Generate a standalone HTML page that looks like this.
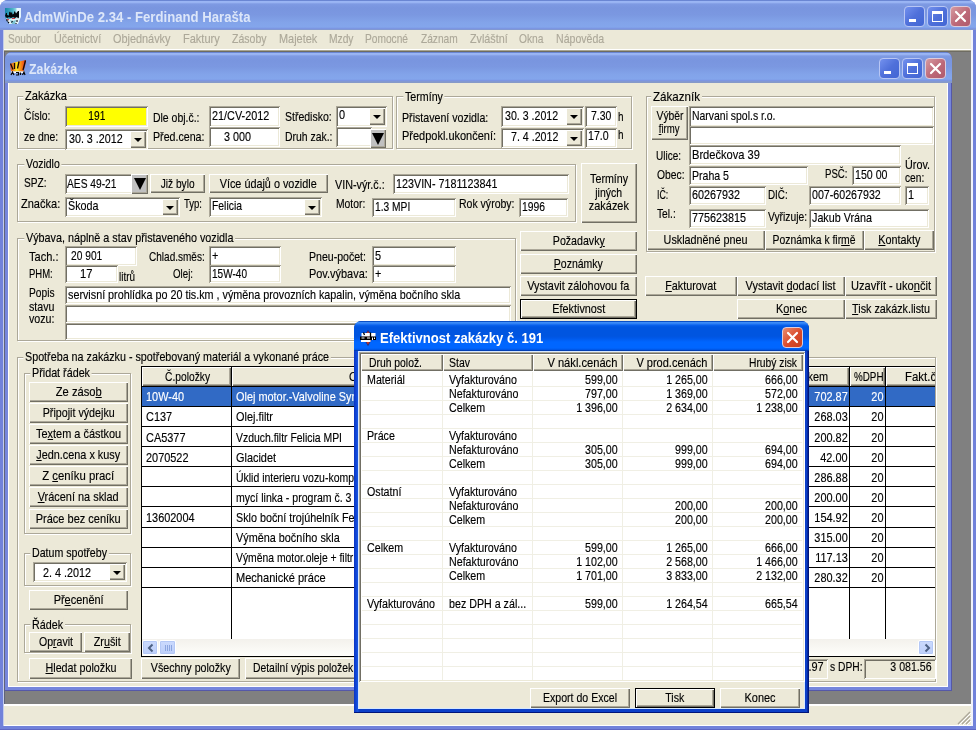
<!DOCTYPE html>
<html lang="cs"><head><meta charset="utf-8"><title>AdmWinDe 2.34 - Ferdinand Harašta</title>
<style>
html,body{margin:0;padding:0;background:#fff;overflow:hidden}
#r{position:relative;width:976px;height:730px;overflow:hidden;will-change:transform;font-family:"Liberation Sans",sans-serif;color:#000}
#r div,#r .a,#r span.t{position:absolute;box-sizing:border-box}
.t{white-space:pre;line-height:16px;display:block;-webkit-text-stroke:0.15px currentColor}
.t u{text-decoration:underline;text-underline-offset:1px}
.gl{background:#ECE9D8;box-shadow:-2px 0 0 #ECE9D8,2px 0 0 #ECE9D8}
.f{background:#fff;box-shadow:inset 1px 1px 0 #ACA899,inset -1px -1px 0 #fff,inset 2px 2px 0 #716F64,inset -2px -2px 0 #ECE9D8}
.b{background:#ECE9D8;box-shadow:inset 1px 1px 0 #fff,inset -1px -1px 0 #716F64,inset -2px -2px 0 #ACA899}
.b.d{border:1px solid #000}
.b.h{box-shadow:inset 1px 1px 0 #fff,inset -1px -1px 0 #716F64,inset -2px -2px 0 #ACA899}
.b.hh{box-shadow:inset 1px 1px 0 #fff,inset -1px -1px 0 #716F64,inset -2px -2px 0 #ACA899}
.g{border:1px solid #ACA899;box-shadow:inset 1px 1px 0 #fff,1px 1px 0 #fff}
i.ar{position:absolute;width:0;height:0;border-left:4px solid transparent;border-right:4px solid transparent;border-top:4px solid #000}
i.bar{position:absolute;width:0;height:0;border-left:6px solid transparent;border-right:6px solid transparent;border-top:12px solid #000}
.mainwin{background:#7182DA;border-radius:8px 8px 0 0;box-shadow:inset 0 -1px 0 #5F67C4}
.childwin{background:#7686DC;border-radius:7px 7px 0 0;box-shadow:inset -1px 0 0 #5558A8,inset 0 -1px 0 #5558A8}
.cap-in{border-radius:8px 8px 0 0;background:linear-gradient(#6A86D3 0,#6A86D3 1px,#9AB5F4 1.5px,#98B3F2 2.5px,#7E9AE3 4px,#7995DF 8px,#7B98E1 15px,#82A3E9 22px,#84A6EC 27px,#7C96E2 28.5px,#8599C9 30px)}
.cap-in.ch{border-radius:7px 7px 0 0}
.cap-act{border-radius:7px 7px 0 0;background:linear-gradient(#0A4FC6 0,#0A4FC6 1px,#3C8CF8 1.5px,#2A7CF4 3px,#0A62EE 4px,#0055E0 6px,#0055E0 15px,#0058E8 17px,#0066FF 21px,#0066FF 27px,#0058E8 28.5px,#003EB4 29.5px)}
.dlg{background:linear-gradient(90deg,#0A34C4 0,#1656E4 4px,#0C3FC8 5px,#0C3FC8 calc(100% - 2px),#00157A calc(100% - 1px));border-radius:8px 8px 0 0;box-shadow:inset 0 -1px 0 #00157A}
.cb{border:1px solid #B8C6F4;border-radius:4px;background:linear-gradient(135deg,#7391EE 0,#4F70DA 50%,#4266D4 100%)}
.cb.cx{border-color:#DCCCDC;background:linear-gradient(135deg,#D69AA0 0,#BD6878 55%,#B05A6C 100%)}
.cb.cx.act{background:linear-gradient(135deg,#EC8D6E,#D9492B 55%,#C8401F)}
.sbt{background:linear-gradient(#F3F1EC,#FEFEFB)}
.sbb{border:1px solid #fff;border-radius:2px;background:linear-gradient(#CBDAFD,#BDCFFA);box-shadow:inset 0 0 0 1px #B4C8F6}
</style></head>
<body><div id="r">
<div class="mainwin" style="left:0px;top:0px;width:976px;height:730px;"></div>
<div class="cap-in" style="left:0px;top:0px;width:976px;height:30px;"></div>
<span class="t" style="top:9.00px;font-size:14px;left:24.30px;transform:scaleX(0.9397);transform-origin:0 0;color:#DCE6F9;font-weight:bold;-webkit-text-stroke:0;">AdmWinDe 2.34 - Ferdinand Harašta</span>
<svg class="a" style="left:5px;top:8px" width="16" height="16" viewBox="0 0 16 16"><defs><linearGradient id="ig" x1="0" x2="1" y1="0" y2="0"><stop offset="0" stop-color="#1583A6"/><stop offset=".5" stop-color="#4FB6C8"/><stop offset=".68" stop-color="#8FD4E0"/><stop offset=".75" stop-color="#EAF8FF"/><stop offset="1" stop-color="#E2F4FC"/></linearGradient></defs><path d="M0 0h16v9l-1 2-2 5H4L1 11 0 9z" fill="url(#ig)"/><path d="M1 10l3 1 4-1 4 1 2-1-1 3-1 3H4z" fill="#E3F3F7"/><path d="M5 12l2 4h3l1-4-3 1z" fill="#7CC4D2"/><path d="M2 11l2 1M7 10.5l3 0" stroke="#D8303A" stroke-width="1.2"/><path d="M0 8l1-3h1v2l2 .5V4.500l1 -1 1 1.500 1-1 .5 2.500 1.500-1V3.500l1 0 1 2 2-2.500h1v6.500l-1 1-1-1.500-2 1-2-1-2 1-2-1-2 1z" fill="#04070b"/><path d="M1.500 11.500l1 2M3 14l1 1M7.500 13l-1 1.500M12 12v2M11 15v1" stroke="#04070b" stroke-width="1.100"/></svg>
<div class="cb" style="left:904px;top:6px;width:21px;height:21px;"><i style="position:absolute;left:4px;top:12px;width:7px;height:3px;background:#fff"></i></div>
<div class="cb" style="left:927px;top:6px;width:21px;height:21px;"><i style="position:absolute;left:4px;top:4px;width:11px;height:11px;border:1px solid #fff;border-top-width:3px;box-sizing:border-box"></i></div>
<div class="cb cx" style="left:950px;top:6px;width:21px;height:21px;"><svg width="19" height="19" style="position:absolute;left:0;top:0"><path d="M5 5l9 9M14 5l-9 9" stroke="#fff" stroke-width="2.2" stroke-linecap="round"/></svg></div>
<div style="left:3px;top:30px;width:1px;height:696px;background:#C4CCEA;"></div>
<div style="left:971px;top:30px;width:2px;height:696px;background:#F2F3FA;"></div>
<div style="left:4px;top:30px;width:967px;height:19px;background:#ECE9D8;"></div>
<span class="t" style="top:30.50px;font-size:13px;left:8.30px;transform:scaleX(0.7753);transform-origin:0 0;color:#ACA899;">Soubor</span>
<span class="t" style="top:30.50px;font-size:13px;left:53.80px;transform:scaleX(0.8278);transform-origin:0 0;color:#ACA899;">Účetnictví</span>
<span class="t" style="top:30.50px;font-size:13px;left:113.05px;transform:scaleX(0.8375);transform-origin:0 0;color:#ACA899;">Objednávky</span>
<span class="t" style="top:30.50px;font-size:13px;left:182.55px;transform:scaleX(0.8479);transform-origin:0 0;color:#ACA899;">Faktury</span>
<span class="t" style="top:30.50px;font-size:13px;left:231.80px;transform:scaleX(0.8091);transform-origin:0 0;color:#ACA899;">Zásoby</span>
<span class="t" style="top:30.50px;font-size:13px;left:278.80px;transform:scaleX(0.8401);transform-origin:0 0;color:#ACA899;">Majetek</span>
<span class="t" style="top:30.50px;font-size:13px;left:328.80px;transform:scaleX(0.7887);transform-origin:0 0;color:#ACA899;">Mzdy</span>
<span class="t" style="top:30.50px;font-size:13px;left:365.30px;transform:scaleX(0.7829);transform-origin:0 0;color:#ACA899;">Pomocné</span>
<span class="t" style="top:30.50px;font-size:13px;left:420.80px;transform:scaleX(0.7824);transform-origin:0 0;color:#ACA899;">Záznam</span>
<span class="t" style="top:30.50px;font-size:13px;left:469.55px;transform:scaleX(0.8294);transform-origin:0 0;color:#ACA899;">Zvláštní</span>
<span class="t" style="top:30.50px;font-size:13px;left:519.05px;transform:scaleX(0.7883);transform-origin:0 0;color:#ACA899;">Okna</span>
<span class="t" style="top:30.50px;font-size:13px;left:556.05px;transform:scaleX(0.8139);transform-origin:0 0;color:#ACA899;">Nápověda</span>
<div style="left:4px;top:49px;width:967px;height:1px;background:#fff;"></div>
<div style="left:4px;top:50px;width:967px;height:1px;background:#A8A593;"></div>
<div style="left:4px;top:51px;width:967px;height:1px;background:#6E6C62;"></div>
<div style="left:4px;top:52px;width:967px;height:652px;background:#808080;"></div>
<div style="left:4px;top:52px;width:1px;height:652px;background:#5E637C;"></div>
<div style="left:4px;top:704px;width:967px;height:22px;background:#ECE9D8;border-top:2px solid #fff;border-bottom:1px solid #fff;box-sizing:border-box"></div>
<svg class="a" style="left:957px;top:711px" width="14" height="14"><path d="M13 1L1 13M13 5L5 13M13 9L9 13" stroke="#ACA899" stroke-width="1.4"/><path d="M14 2L2 14M14 6L6 14M14 10L10 14" stroke="#fff" stroke-width="1"/></svg>
<div class="childwin" style="left:5px;top:52px;width:947px;height:639px;"></div>
<div class="cap-in ch" style="left:5px;top:52px;width:947px;height:31px;"></div>
<span class="t" style="top:60.75px;font-size:14px;left:29.30px;transform:scaleX(0.8810);transform-origin:0 0;color:#DCE6F9;font-weight:bold;-webkit-text-stroke:0;">Zakázka</span>
<svg class="a" style="left:10px;top:60px" width="16" height="16" viewBox="0 0 16 16"><defs><linearGradient id="fg" x1="0" x2="1" y1="0" y2="0"><stop offset="0" stop-color="#E04A20"/><stop offset=".25" stop-color="#F79A1C"/><stop offset=".42" stop-color="#FFE91E"/><stop offset=".6" stop-color="#FBA315"/><stop offset=".85" stop-color="#F0561A"/><stop offset="1" stop-color="#A8260E"/></linearGradient></defs><path d="M0 4l4-1.500L9 1.500 16 0l-1 6-1.500 5.500H1z" fill="url(#fg)"/><path d="M.5 3.500L3 9.500M4.500 3v6M9 1.500L7.500 8.500M15.500 .5L13 10" stroke="#16080a" stroke-width="1.300" fill="none"/><path d="M1 11.500h14v1.500H1z" fill="#fff"/><path d="M1 15l1.500-3 1.500 3M6 12.500h2.500v2.500H6M10.500 12.500v2.500M12.500 15l1.500-3 1 3" stroke="#06060a" stroke-width="1.200" fill="none"/></svg>
<div class="cb" style="left:879px;top:58px;width:21px;height:21px;"><i style="position:absolute;left:4px;top:12px;width:7px;height:3px;background:#fff"></i></div>
<div class="cb" style="left:902px;top:58px;width:21px;height:21px;"><i style="position:absolute;left:4px;top:4px;width:11px;height:11px;border:1px solid #fff;border-top-width:3px;box-sizing:border-box"></i></div>
<div class="cb cx" style="left:925px;top:58px;width:21px;height:21px;"><svg width="19" height="19" style="position:absolute;left:0;top:0"><path d="M5 5l9 9M14 5l-9 9" stroke="#fff" stroke-width="2.2" stroke-linecap="round"/></svg></div>
<div style="left:8px;top:83px;width:940px;height:604px;background:#fff;"></div>
<div style="left:9px;top:83px;width:938px;height:603px;background:#ECE9D8;"></div>
<div class="g" style="left:17px;top:96px;width:376px;height:53px;"></div>
<span class="t gl" style="top:88.30px;font-size:13px;left:25.05px;transform:scaleX(0.8547);transform-origin:0 0;">Zakázka</span>
<span class="t" style="top:108.00px;font-size:13px;left:23.80px;transform:scaleX(0.7974);transform-origin:0 0;">Číslo:</span>
<div class="f" style="left:65px;top:106px;width:83px;height:21px;background:#FFFF00;"></div>
<span class="t" style="top:108.00px;font-size:13px;left:86.40px;transform:scaleX(0.7833);transform-origin:50% 0;">191</span>
<span class="t" style="top:128.50px;font-size:13px;left:23.80px;transform:scaleX(0.8029);transform-origin:0 0;">ze dne:</span>
<div class="f" style="left:65px;top:129px;width:83px;height:21px;"></div>
<div class="b" style="left:130px;top:131px;width:16px;height:17px;"><i class="ar" style="left:4.0px;top:7.0px"></i></div>
<span class="t" style="top:131.00px;font-size:13px;left:68.90px;transform:scaleX(0.8238);transform-origin:0 0;">30. 3 .2012</span>
<span class="t" style="top:109.50px;font-size:13px;left:152.80px;transform:scaleX(0.8043);transform-origin:0 0;">Dle obj.č.:</span>
<div class="f" style="left:209px;top:106px;width:71px;height:21px;"></div>
<span class="t" style="top:107.80px;font-size:13px;left:212.30px;transform:scaleX(0.8337);transform-origin:0 0;">21/CV-2012</span>
<span class="t" style="top:128.50px;font-size:13px;left:152.80px;transform:scaleX(0.8191);transform-origin:0 0;">Před.cena:</span>
<div class="f" style="left:209px;top:127px;width:71px;height:20px;"></div>
<span class="t" style="top:128.50px;font-size:13px;left:224.30px;transform:scaleX(0.8296);transform-origin:0 0;">3 000</span>
<span class="t" style="top:108.50px;font-size:13px;left:284.55px;transform:scaleX(0.8086);transform-origin:0 0;">Středisko:</span>
<div class="f" style="left:336px;top:106px;width:51px;height:21px;"></div>
<div class="b" style="left:369px;top:108px;width:16px;height:17px;"><i class="ar" style="left:4.0px;top:7.0px"></i></div>
<span class="t" style="top:107.00px;font-size:13px;left:339.30px;transform:scaleX(0.8400);transform-origin:0 0;">0</span>
<span class="t" style="top:128.50px;font-size:13px;left:284.55px;transform:scaleX(0.8017);transform-origin:0 0;">Druh zak.:</span>
<div class="f" style="left:336px;top:127px;width:36px;height:20px;"></div>
<div class="b" style="left:370px;top:129px;width:16px;height:19px;background:#C0C0C0;"><i class="bar" style="left:2.0px;top:3.5px"></i></div>
<div class="g" style="left:396px;top:96px;width:236px;height:53px;"></div>
<span class="t gl" style="top:89.30px;font-size:13px;left:405.30px;transform:scaleX(0.8197);transform-origin:0 0;">Termíny</span>
<span class="t" style="top:109.70px;font-size:13px;left:402.05px;transform:scaleX(0.8175);transform-origin:0 0;">Přistavení vozidla:</span>
<div class="f" style="left:501px;top:106px;width:83px;height:21px;"></div>
<div class="b" style="left:566px;top:108px;width:16px;height:17px;"><i class="ar" style="left:4.0px;top:7.0px"></i></div>
<span class="t" style="top:108.00px;font-size:13px;left:505.10px;transform:scaleX(0.8161);transform-origin:0 0;">30. 3 .2012</span>
<div class="f" style="left:585px;top:106px;width:32px;height:21px;"></div>
<span class="t" style="top:108.00px;font-size:13px;left:591.40px;transform:scaleX(0.8059);transform-origin:0 0;">7.30</span>
<span class="t" style="top:109.00px;font-size:13px;left:618.00px;transform:scaleX(0.7603);transform-origin:0 0;">h</span>
<span class="t" style="top:127.70px;font-size:13px;left:402.05px;transform:scaleX(0.8446);transform-origin:0 0;">Předpokl.ukončení:</span>
<div class="f" style="left:501px;top:128px;width:83px;height:20px;"></div>
<div class="b" style="left:566px;top:130px;width:16px;height:16px;"><i class="ar" style="left:4.0px;top:6.5px"></i></div>
<span class="t" style="top:129.00px;font-size:13px;left:510.90px;transform:scaleX(0.8179);transform-origin:0 0;">7. 4 .2012</span>
<div class="f" style="left:585px;top:128px;width:32px;height:20px;"></div>
<span class="t" style="top:128.30px;font-size:13px;left:588.10px;transform:scaleX(0.8178);transform-origin:0 0;">17.0</span>
<span class="t" style="top:127.00px;font-size:13px;left:618.00px;transform:scaleX(0.7603);transform-origin:0 0;">h</span>
<div class="g" style="left:646px;top:96px;width:289px;height:156px;"></div>
<span class="t gl" style="top:89.10px;font-size:13px;left:652.80px;transform:scaleX(0.8910);transform-origin:0 0;">Zákazník</span>
<div class="b" style="left:651px;top:106px;width:37px;height:34px;"></div>
<span class="t" style="top:107.50px;font-size:13px;left:652.52px;transform:scaleX(0.7948);transform-origin:50% 0;">Výběr</span>
<span class="t" style="top:120.90px;font-size:13px;left:655.41px;transform:scaleX(0.7366);transform-origin:50% 0;"><u>f</u>irmy</span>
<div class="f" style="left:689px;top:106px;width:245px;height:21px;"></div>
<span class="t" style="top:107.50px;font-size:13px;left:692.30px;transform:scaleX(0.8025);transform-origin:0 0;">Narvani spol.s r.o.</span>
<div class="f" style="left:689px;top:126px;width:245px;height:19px;"></div>
<span class="t" style="top:147.50px;font-size:13px;left:656.05px;transform:scaleX(0.7689);transform-origin:0 0;">Ulice:</span>
<div class="f" style="left:689px;top:145px;width:212px;height:20px;"></div>
<span class="t" style="top:146.50px;font-size:13px;left:692.30px;transform:scaleX(0.8553);transform-origin:0 0;">Brdečkova 39</span>
<span class="t" style="top:166.90px;font-size:13px;left:657.30px;transform:scaleX(0.7928);transform-origin:0 0;">Obec:</span>
<div class="f" style="left:689px;top:166px;width:119px;height:19px;"></div>
<span class="t" style="top:167.60px;font-size:13px;left:692.30px;transform:scaleX(0.8123);transform-origin:0 0;">Praha 5</span>
<span class="t" style="top:166.25px;font-size:13px;left:825.05px;transform:scaleX(0.7415);transform-origin:0 0;">PSČ:</span>
<div class="f" style="left:852px;top:166px;width:49px;height:19px;"></div>
<span class="t" style="top:167.00px;font-size:13px;left:855.05px;transform:scaleX(0.8173);transform-origin:0 0;">150 00</span>
<span class="t" style="top:157.00px;font-size:13px;left:904.55px;transform:scaleX(0.8303);transform-origin:0 0;">Úrov.</span>
<span class="t" style="top:169.50px;font-size:13px;left:904.55px;transform:scaleX(0.7832);transform-origin:0 0;">cen:</span>
<span class="t" style="top:186.75px;font-size:13px;left:657.30px;transform:scaleX(0.6767);transform-origin:0 0;">IČ:</span>
<div class="f" style="left:689px;top:186px;width:77px;height:19px;"></div>
<span class="t" style="top:186.50px;font-size:13px;left:692.30px;transform:scaleX(0.8298);transform-origin:0 0;">60267932</span>
<span class="t" style="top:186.75px;font-size:13px;left:768.30px;transform:scaleX(0.7577);transform-origin:0 0;">DIČ:</span>
<div class="f" style="left:809px;top:186px;width:92px;height:19px;"></div>
<span class="t" style="top:186.50px;font-size:13px;left:811.80px;transform:scaleX(0.8198);transform-origin:0 0;">007-60267932</span>
<div class="f" style="left:905px;top:186px;width:24px;height:19px;"></div>
<span class="t" style="top:186.50px;font-size:13px;left:907.80px;transform:scaleX(0.8400);transform-origin:0 0;">1</span>
<span class="t" style="top:206.25px;font-size:13px;left:657.30px;transform:scaleX(0.7864);transform-origin:0 0;">Tel.:</span>
<div class="f" style="left:689px;top:209px;width:77px;height:19px;"></div>
<span class="t" style="top:209.50px;font-size:13px;left:692.30px;transform:scaleX(0.8298);transform-origin:0 0;">775623815</span>
<span class="t" style="top:208.50px;font-size:13px;left:768.30px;transform:scaleX(0.7899);transform-origin:0 0;">Vyřizuje:</span>
<div class="f" style="left:809px;top:209px;width:120px;height:19px;"></div>
<span class="t" style="top:209.50px;font-size:13px;left:811.80px;transform:scaleX(0.8274);transform-origin:0 0;">Jakub Vrána</span>
<div class="b" style="left:647px;top:230px;width:118px;height:20px;"></div>
<span class="t" style="top:232.00px;font-size:13px;left:655.40px;transform:scaleX(0.8300);transform-origin:50% 0;">Uskladněné pneu</span>
<div class="b" style="left:765px;top:230px;width:99px;height:20px;"></div>
<span class="t" style="top:232.00px;font-size:13px;left:762.48px;transform:scaleX(0.7977);transform-origin:50% 0;">Poznámka k fir<u>m</u>ě</span>
<div class="b" style="left:864px;top:230px;width:70px;height:20px;"></div>
<span class="t" style="top:232.00px;font-size:13px;left:873.70px;transform:scaleX(0.8301);transform-origin:50% 0;"><u>K</u>ontakty</span>
<div class="g" style="left:17px;top:164px;width:559px;height:58px;"></div>
<span class="t gl" style="top:156.25px;font-size:13px;left:25.55px;transform:scaleX(0.8051);transform-origin:0 0;">Vozidlo</span>
<span class="t" style="top:174.50px;font-size:13px;left:24.30px;transform:scaleX(0.7784);transform-origin:0 0;">SPZ:</span>
<div class="f" style="left:65px;top:174px;width:68px;height:20px;"></div>
<span class="t" style="top:175.50px;font-size:13px;left:67.30px;transform:scaleX(0.7873);transform-origin:0 0;">AES 49-21</span>
<div class="b" style="left:131px;top:174px;width:17px;height:20px;background:#C0C0C0;"><i class="bar" style="left:2.5px;top:4.0px"></i></div>
<div class="b" style="left:150px;top:174px;width:55px;height:19px;"></div>
<span class="t" style="top:175.50px;font-size:13px;left:155.82px;transform:scaleX(0.7784);transform-origin:50% 0;">Již bylo</span>
<div class="b" style="left:209px;top:174px;width:119px;height:19px;"></div>
<span class="t" style="top:175.50px;font-size:13px;left:210.32px;transform:scaleX(0.8336);transform-origin:50% 0;">Více údajů o vozidle</span>
<span class="t" style="top:177.00px;font-size:13px;left:335.30px;transform:scaleX(0.8298);transform-origin:0 0;">VIN-výr.č.:</span>
<div class="f" style="left:393px;top:174px;width:176px;height:20px;"></div>
<span class="t" style="top:175.50px;font-size:13px;left:396.30px;transform:scaleX(0.8276);transform-origin:0 0;">123VIN- 7181123841</span>
<span class="t" style="top:196.25px;font-size:13px;left:20.55px;transform:scaleX(0.8486);transform-origin:0 0;">Značka:</span>
<div class="f" style="left:65px;top:197px;width:115px;height:20px;"></div>
<div class="b" style="left:162px;top:199px;width:16px;height:16px;"><i class="ar" style="left:4.0px;top:6.5px"></i></div>
<span class="t" style="top:198.00px;font-size:13px;left:68.05px;transform:scaleX(0.8271);transform-origin:0 0;">Škoda</span>
<span class="t" style="top:196.25px;font-size:13px;left:183.80px;transform:scaleX(0.7324);transform-origin:0 0;">Typ:</span>
<div class="f" style="left:209px;top:197px;width:113px;height:20px;"></div>
<div class="b" style="left:304px;top:199px;width:16px;height:16px;"><i class="ar" style="left:4.0px;top:6.5px"></i></div>
<span class="t" style="top:198.00px;font-size:13px;left:211.80px;transform:scaleX(0.7983);transform-origin:0 0;">Felicia</span>
<span class="t" style="top:196.25px;font-size:13px;left:335.80px;transform:scaleX(0.7939);transform-origin:0 0;">Motor:</span>
<div class="f" style="left:372px;top:198px;width:84px;height:19px;"></div>
<span class="t" style="top:198.50px;font-size:13px;left:375.05px;transform:scaleX(0.7869);transform-origin:0 0;">1.3 MPI</span>
<span class="t" style="top:196.25px;font-size:13px;left:458.80px;transform:scaleX(0.8086);transform-origin:0 0;">Rok výroby:</span>
<div class="f" style="left:519px;top:198px;width:49px;height:19px;"></div>
<span class="t" style="top:198.50px;font-size:13px;left:522.30px;transform:scaleX(0.7952);transform-origin:0 0;">1996</span>
<div class="b" style="left:581px;top:163px;width:56px;height:60px;"></div>
<span class="t" style="top:171.25px;font-size:13px;left:585.88px;transform:scaleX(0.8219);transform-origin:50% 0;">Termíny</span>
<span class="t" style="top:185.00px;font-size:13px;left:592.38px;transform:scaleX(0.8045);transform-origin:50% 0;">jiných</span>
<span class="t" style="top:197.50px;font-size:13px;left:585.15px;transform:scaleX(0.8385);transform-origin:50% 0;">zakázek</span>
<div class="g" style="left:17px;top:238px;width:499px;height:103px;"></div>
<span class="t gl" style="top:229.50px;font-size:13px;left:25.55px;transform:scaleX(0.8298);transform-origin:0 0;">Výbava, náplně a stav přistaveného vozidla</span>
<span class="t" style="top:249.00px;font-size:13px;left:29.30px;transform:scaleX(0.8505);transform-origin:0 0;">Tach.:</span>
<div class="f" style="left:65px;top:246px;width:72px;height:20px;"></div>
<span class="t" style="top:247.50px;font-size:13px;left:71.05px;transform:scaleX(0.7859);transform-origin:0 0;">20 901</span>
<span class="t" style="top:266.00px;font-size:13px;left:29.30px;transform:scaleX(0.7308);transform-origin:0 0;">PHM:</span>
<div class="f" style="left:65px;top:265px;width:53px;height:18px;"></div>
<span class="t" style="top:265.80px;font-size:13px;left:79.80px;transform:scaleX(0.8639);transform-origin:0 0;">17</span>
<span class="t" style="top:268.80px;font-size:13px;left:118.80px;transform:scaleX(0.7636);transform-origin:0 0;">litrů</span>
<span class="t" style="top:249.00px;font-size:13px;left:148.55px;transform:scaleX(0.7716);transform-origin:0 0;">Chlad.směs:</span>
<div class="f" style="left:209px;top:246px;width:72px;height:20px;"></div>
<span class="t" style="top:247.50px;font-size:13px;left:212.30px;transform:scaleX(0.8400);transform-origin:0 0;">+</span>
<span class="t" style="top:266.00px;font-size:13px;left:173.05px;transform:scaleX(0.7481);transform-origin:0 0;">Olej:</span>
<div class="f" style="left:209px;top:265px;width:72px;height:18px;"></div>
<span class="t" style="top:266.00px;font-size:13px;left:212.30px;transform:scaleX(0.7727);transform-origin:0 0;">15W-40</span>
<span class="t" style="top:249.00px;font-size:13px;left:308.80px;transform:scaleX(0.8130);transform-origin:0 0;">Pneu-počet:</span>
<div class="f" style="left:372px;top:246px;width:84px;height:20px;"></div>
<span class="t" style="top:247.50px;font-size:13px;left:375.05px;transform:scaleX(0.8400);transform-origin:0 0;">5</span>
<span class="t" style="top:266.00px;font-size:13px;left:308.80px;transform:scaleX(0.8410);transform-origin:0 0;">Pov.výbava:</span>
<div class="f" style="left:372px;top:265px;width:84px;height:18px;"></div>
<span class="t" style="top:266.00px;font-size:13px;left:375.05px;transform:scaleX(0.8400);transform-origin:0 0;">+</span>
<span class="t" style="top:284.70px;font-size:13px;left:29.30px;transform:scaleX(0.7839);transform-origin:0 0;">Popis</span>
<span class="t" style="top:298.50px;font-size:13px;left:29.30px;transform:scaleX(0.8205);transform-origin:0 0;">stavu</span>
<span class="t" style="top:311.00px;font-size:13px;left:29.30px;transform:scaleX(0.8205);transform-origin:0 0;">vozu:</span>
<div class="f" style="left:65px;top:286px;width:446px;height:18px;"></div>
<span class="t" style="top:287.20px;font-size:13px;left:68.05px;transform:scaleX(0.8288);transform-origin:0 0;">servisní prohlídka po 20 tis.km , výměna provozních kapalin, výměna bočního skla</span>
<div class="f" style="left:65px;top:305px;width:446px;height:18px;"></div>
<div class="f" style="left:65px;top:323px;width:446px;height:17px;"></div>
<div class="b" style="left:520px;top:231px;width:117px;height:20px;"></div>
<span class="t" style="top:233.00px;font-size:13px;left:546.70px;transform:scaleX(0.8177);transform-origin:50% 0;">Požadavk<u>y</u></span>
<div class="b" style="left:520px;top:254px;width:117px;height:20px;"></div>
<span class="t" style="top:256.00px;font-size:13px;left:548.15px;transform:scaleX(0.8072);transform-origin:50% 0;"><u>P</u>oznámky</span>
<div class="b" style="left:520px;top:276px;width:117px;height:20px;"></div>
<span class="t" style="top:278.00px;font-size:13px;left:517.31px;transform:scaleX(0.8335);transform-origin:50% 0;">Vystavit zálohovou fa</span>
<div class="b d" style="left:520px;top:299px;width:117px;height:20px;"></div>
<span class="t" style="top:301.00px;font-size:13px;left:546.70px;transform:scaleX(0.8334);transform-origin:50% 0;">Efektivnost</span>
<div class="b" style="left:645px;top:276px;width:92px;height:20px;"></div>
<span class="t" style="top:278.00px;font-size:13px;left:660.29px;transform:scaleX(0.8303);transform-origin:50% 0;"><u>F</u>akturovat</span>
<div class="b" style="left:737px;top:276px;width:108px;height:20px;"></div>
<span class="t" style="top:278.00px;font-size:13px;left:737.41px;transform:scaleX(0.8397);transform-origin:50% 0;">Vystavit <u>d</u>odací list</span>
<div class="b" style="left:845px;top:276px;width:92px;height:20px;"></div>
<span class="t" style="top:278.00px;font-size:13px;left:844.04px;transform:scaleX(0.8518);transform-origin:50% 0;">Uzavřít - uko<u>n</u>čit</span>
<div class="b" style="left:737px;top:299px;width:108px;height:20px;"></div>
<span class="t" style="top:301.00px;font-size:13px;left:772.56px;transform:scaleX(0.8407);transform-origin:50% 0;">K<u>o</u>nec</span>
<div class="b" style="left:845px;top:299px;width:92px;height:20px;"></div>
<span class="t" style="top:301.00px;font-size:13px;left:843.92px;transform:scaleX(0.8284);transform-origin:50% 0;"><u>T</u>isk zakázk.listu</span>
<div class="g" style="left:17px;top:357px;width:919px;height:325px;"></div>
<span class="t gl" style="top:348.90px;font-size:13px;left:25.30px;transform:scaleX(0.8265);transform-origin:0 0;">Spotřeba na zakázku - spotřebovaný materiál a vykonané práce</span>
<div class="g" style="left:24px;top:373px;width:107px;height:161px;"></div>
<span class="t gl" style="top:364.70px;font-size:13px;left:32.30px;transform:scaleX(0.8275);transform-origin:0 0;">Přidat řádek</span>
<div class="b" style="left:29px;top:382px;width:99px;height:20px;"></div>
<span class="t" style="top:384.00px;font-size:13px;left:51.76px;transform:scaleX(0.8601);transform-origin:50% 0;">Ze záso<u>b</u></span>
<div class="b" style="left:29px;top:403px;width:99px;height:20px;"></div>
<span class="t" style="top:405.00px;font-size:13px;left:34.78px;transform:scaleX(0.8234);transform-origin:50% 0;">Připojit výdejku</span>
<div class="b" style="left:29px;top:424px;width:99px;height:20px;"></div>
<span class="t" style="top:426.00px;font-size:13px;left:27.92px;transform:scaleX(0.8403);transform-origin:50% 0;">Te<u>x</u>tem a částkou</span>
<div class="b" style="left:29px;top:445px;width:99px;height:20px;"></div>
<span class="t" style="top:447.00px;font-size:13px;left:28.27px;transform:scaleX(0.8362);transform-origin:50% 0;"><u>J</u>edn.cena x kusy</span>
<div class="b" style="left:29px;top:466px;width:99px;height:20px;"></div>
<span class="t" style="top:468.00px;font-size:13px;left:37.31px;transform:scaleX(0.8741);transform-origin:50% 0;">Z <u>c</u>eníku prací</span>
<div class="b" style="left:29px;top:487px;width:99px;height:20px;"></div>
<span class="t" style="top:489.00px;font-size:13px;left:30.32px;transform:scaleX(0.8406);transform-origin:50% 0;"><u>V</u>rácení na sklad</span>
<div class="b" style="left:29px;top:509px;width:99px;height:20px;"></div>
<span class="t" style="top:511.00px;font-size:13px;left:28.27px;transform:scaleX(0.8462);transform-origin:50% 0;">Práce bez ceníku</span>
<div class="g" style="left:24px;top:553px;width:107px;height:33px;"></div>
<span class="t gl" style="top:545.00px;font-size:13px;left:32.30px;transform:scaleX(0.8173);transform-origin:0 0;">Datum spotřeby</span>
<div class="f" style="left:33px;top:562px;width:94px;height:20px;"></div>
<div class="b" style="left:109px;top:564px;width:16px;height:16px;"><i class="ar" style="left:4.0px;top:6.5px"></i></div>
<span class="t" style="top:564.70px;font-size:13px;left:42.80px;transform:scaleX(0.8300);transform-origin:0 0;">2. 4 .2012</span>
<div class="b" style="left:29px;top:590px;width:99px;height:20px;"></div>
<span class="t" style="top:592.00px;font-size:13px;left:48.87px;transform:scaleX(0.8437);transform-origin:50% 0;">Př<u>e</u>cenění</span>
<div class="g" style="left:24px;top:624px;width:107px;height:29px;"></div>
<span class="t gl" style="top:616.50px;font-size:13px;left:32.30px;transform:scaleX(0.8249);transform-origin:0 0;">Řádek</span>
<div class="b" style="left:29px;top:632px;width:53px;height:20px;"></div>
<span class="t" style="top:634.00px;font-size:13px;left:34.55px;transform:scaleX(0.8113);transform-origin:50% 0;">Op<u>r</u>avit</span>
<div class="b" style="left:84px;top:632px;width:46px;height:20px;"></div>
<span class="t" style="top:634.00px;font-size:13px;left:90.75px;transform:scaleX(0.8308);transform-origin:50% 0;">Zr<u>u</u>šit</span>
<div class="b" style="left:29px;top:658px;width:103px;height:21px;"></div>
<span class="t" style="top:660.00px;font-size:13px;left:37.50px;transform:scaleX(0.8256);transform-origin:50% 0;"><u>H</u>ledat položku</span>
<div class="b" style="left:141px;top:658px;width:99px;height:21px;"></div>
<span class="t" style="top:660.00px;font-size:13px;left:141.72px;transform:scaleX(0.8200);transform-origin:50% 0;">Všechny položky</span>
<div class="b" style="left:245px;top:658px;width:155px;height:21px;"></div>
<span class="t" style="top:660.00px;font-size:13px;left:252.80px;transform:scaleX(0.7968);transform-origin:0 0;">Detailní výpis položek</span>
<div class="f" style="left:780px;top:659px;width:48px;height:20px;background:#ECE9D8;"></div>
<span class="t" style="top:659.00px;font-size:13px;left:773.39px;transform:scaleX(0.8400);transform-origin:100% 0;">2 567.97</span>
<span class="t" style="top:658.75px;font-size:13px;left:830.05px;transform:scaleX(0.7894);transform-origin:0 0;">s DPH:</span>
<div class="f" style="left:864px;top:659px;width:72px;height:20px;background:#ECE9D8;"></div>
<span class="t" style="top:659.00px;font-size:13px;left:881.39px;transform:scaleX(0.8151);transform-origin:100% 0;">3 081.56</span>
<div style="left:141px;top:366px;width:794px;height:291px;background:#fff;border:1px solid #000;border-right:0;box-sizing:border-box"></div>
<div class="b hh" style="left:142px;top:367px;width:89px;height:19px;"></div>
<div class="b hh" style="left:232px;top:367px;width:540px;height:19px;"></div>
<div class="b hh" style="left:773px;top:367px;width:76px;height:19px;"></div>
<div class="b hh" style="left:850px;top:367px;width:35px;height:19px;"></div>
<div class="b hh" style="left:886px;top:367px;width:52px;height:19px;"></div>
<span class="t" style="top:368.70px;font-size:13px;left:158.96px;transform:scaleX(0.7884);transform-origin:50% 0;">Č.položky</span>
<span class="t" style="top:368.70px;font-size:13px;left:349.30px;transform:scaleX(0.8400);transform-origin:0 0;">Označení položky</span>
<span class="t" style="top:368.70px;font-size:13px;left:783.92px;transform:scaleX(0.8400);transform-origin:100% 0;">Celkem</span>
<span class="t" style="top:368.70px;font-size:13px;left:853.60px;transform:scaleX(0.7561);transform-origin:0 0;">%DPH</span>
<div style="left:886px;top:368px;width:49px;height:18px;overflow:hidden">
<span class="t" style="top:0.70px;font-size:13px;left:18.55px;transform:scaleX(0.8800);transform-origin:0 0;">Fakt.č.</span>
</div>
<div style="left:141px;top:386px;width:794px;height:1px;background:#000;"></div>
<div style="left:142px;top:387px;width:793px;height:19px;background:#316AC5;"></div>
<div style="left:141px;top:406px;width:794px;height:1px;background:#000;"></div>
<span class="t" style="top:389.40px;font-size:13px;left:145.60px;transform:scaleX(0.8400);transform-origin:0 0;color:#fff;">10W-40</span>
<span class="t" style="top:389.40px;font-size:13px;left:235.50px;transform:scaleX(0.8384);transform-origin:0 0;color:#fff;">Olej motor.-Valvoline Synpower 10W-40</span>
<span class="t" style="top:389.40px;font-size:13px;left:807.73px;transform:scaleX(0.8400);transform-origin:100% 0;color:#fff;">702.87</span>
<span class="t" style="top:389.40px;font-size:13px;left:869.28px;transform:scaleX(0.8400);transform-origin:100% 0;color:#fff;">20</span>
<div style="left:141px;top:426px;width:794px;height:1px;background:#000;"></div>
<span class="t" style="top:409.48px;font-size:13px;left:145.60px;transform:scaleX(0.8400);transform-origin:0 0;">C137</span>
<span class="t" style="top:409.48px;font-size:13px;left:235.50px;transform:scaleX(0.8397);transform-origin:0 0;">Olej.filtr</span>
<span class="t" style="top:409.48px;font-size:13px;left:807.73px;transform:scaleX(0.8400);transform-origin:100% 0;">268.03</span>
<span class="t" style="top:409.48px;font-size:13px;left:869.28px;transform:scaleX(0.8400);transform-origin:100% 0;">20</span>
<div style="left:141px;top:446px;width:794px;height:1px;background:#000;"></div>
<span class="t" style="top:429.56px;font-size:13px;left:145.60px;transform:scaleX(0.8400);transform-origin:0 0;">CA5377</span>
<span class="t" style="top:429.56px;font-size:13px;left:235.50px;transform:scaleX(0.8018);transform-origin:0 0;">Vzduch.filtr Felicia MPI</span>
<span class="t" style="top:429.56px;font-size:13px;left:807.73px;transform:scaleX(0.8400);transform-origin:100% 0;">200.82</span>
<span class="t" style="top:429.56px;font-size:13px;left:869.28px;transform:scaleX(0.8400);transform-origin:100% 0;">20</span>
<div style="left:141px;top:466px;width:794px;height:1px;background:#000;"></div>
<span class="t" style="top:449.64px;font-size:13px;left:145.60px;transform:scaleX(0.8400);transform-origin:0 0;">2070522</span>
<span class="t" style="top:449.64px;font-size:13px;left:235.50px;transform:scaleX(0.8385);transform-origin:0 0;">Glacidet</span>
<span class="t" style="top:449.64px;font-size:13px;left:814.95px;transform:scaleX(0.8400);transform-origin:100% 0;">42.00</span>
<span class="t" style="top:449.64px;font-size:13px;left:869.28px;transform:scaleX(0.8400);transform-origin:100% 0;">20</span>
<div style="left:141px;top:486px;width:794px;height:1px;background:#000;"></div>
<span class="t" style="top:469.72px;font-size:13px;left:235.50px;transform:scaleX(0.8045);transform-origin:0 0;">Úklid interieru vozu-komplet</span>
<span class="t" style="top:469.72px;font-size:13px;left:807.73px;transform:scaleX(0.8400);transform-origin:100% 0;">286.88</span>
<span class="t" style="top:469.72px;font-size:13px;left:869.28px;transform:scaleX(0.8400);transform-origin:100% 0;">20</span>
<div style="left:141px;top:506px;width:794px;height:1px;background:#000;"></div>
<span class="t" style="top:489.80px;font-size:13px;left:235.50px;transform:scaleX(0.8115);transform-origin:0 0;">mycí linka - program č. 3</span>
<span class="t" style="top:489.80px;font-size:13px;left:807.73px;transform:scaleX(0.8400);transform-origin:100% 0;">200.00</span>
<span class="t" style="top:489.80px;font-size:13px;left:869.28px;transform:scaleX(0.8400);transform-origin:100% 0;">20</span>
<div style="left:141px;top:527px;width:794px;height:1px;background:#000;"></div>
<span class="t" style="top:509.88px;font-size:13px;left:145.60px;transform:scaleX(0.8400);transform-origin:0 0;">13602004</span>
<span class="t" style="top:509.88px;font-size:13px;left:235.50px;transform:scaleX(0.8282);transform-origin:0 0;">Sklo boční trojúhelník Felicia</span>
<span class="t" style="top:509.88px;font-size:13px;left:807.73px;transform:scaleX(0.8400);transform-origin:100% 0;">154.92</span>
<span class="t" style="top:509.88px;font-size:13px;left:869.28px;transform:scaleX(0.8400);transform-origin:100% 0;">20</span>
<div style="left:141px;top:547px;width:794px;height:1px;background:#000;"></div>
<span class="t" style="top:529.96px;font-size:13px;left:235.50px;transform:scaleX(0.8343);transform-origin:0 0;">Výměna bočního skla</span>
<span class="t" style="top:529.96px;font-size:13px;left:807.73px;transform:scaleX(0.8400);transform-origin:100% 0;">315.00</span>
<span class="t" style="top:529.96px;font-size:13px;left:869.28px;transform:scaleX(0.8400);transform-origin:100% 0;">20</span>
<div style="left:141px;top:567px;width:794px;height:1px;background:#000;"></div>
<span class="t" style="top:550.04px;font-size:13px;left:235.50px;transform:scaleX(0.7977);transform-origin:0 0;">Výměna motor.oleje + filtr</span>
<span class="t" style="top:550.04px;font-size:13px;left:808.70px;transform:scaleX(0.8400);transform-origin:100% 0;">117.13</span>
<span class="t" style="top:550.04px;font-size:13px;left:869.28px;transform:scaleX(0.8400);transform-origin:100% 0;">20</span>
<div style="left:141px;top:587px;width:794px;height:1px;background:#000;"></div>
<span class="t" style="top:570.12px;font-size:13px;left:235.50px;transform:scaleX(0.8493);transform-origin:0 0;">Mechanické práce</span>
<span class="t" style="top:570.12px;font-size:13px;left:807.73px;transform:scaleX(0.8400);transform-origin:100% 0;">280.32</span>
<span class="t" style="top:570.12px;font-size:13px;left:869.28px;transform:scaleX(0.8400);transform-origin:100% 0;">20</span>
<div style="left:231px;top:366px;width:1px;height:273px;background:#000;"></div>
<div style="left:772px;top:366px;width:1px;height:273px;background:#000;"></div>
<div style="left:849px;top:366px;width:1px;height:273px;background:#000;"></div>
<div style="left:885px;top:366px;width:1px;height:273px;background:#000;"></div>
<div style="left:935px;top:367px;width:1px;height:290px;background:#ACA899;"></div>
<div style="left:936px;top:367px;width:1px;height:290px;background:#fff;"></div>
<div style="left:937px;top:367px;width:3px;height:290px;background:#ECE9D8;"></div>
<div class="sbt" style="left:142px;top:639px;width:793px;height:17px;"></div>
<div class="sbb" style="left:142px;top:640px;width:16px;height:15px;"><svg width="16" height="15"><path d="M9.5 3.5L6 7l3.5 3.5" stroke="#4D6185" stroke-width="2" fill="none"/></svg></div>
<div class="sbb" style="left:918px;top:640px;width:16px;height:15px;"><svg width="16" height="15"><path d="M6.500 3.500L10 7l-3.500 3.500" stroke="#4D6185" stroke-width="2" fill="none"/></svg></div>
<div class="sbb" style="left:159px;top:640px;width:17px;height:15px;"><svg width="17" height="15"><path d="M5.500 4v6M7.500 4v6M9.500 4v6M11.500 4v6" stroke="#8CA6E0" stroke-width="1"/></svg></div>
<div class="dlg" style="left:354px;top:321px;width:455px;height:392px;"></div>
<div class="cap-act" style="left:354px;top:321px;width:455px;height:30px;"></div>
<svg class="a" style="left:360px;top:329.500px" width="16" height="16" viewBox="0 0 16 16"><path d="M8 .5l4.500 7L8 15.500 3.500 7.500z" fill="#C63A30" stroke="#101a60" stroke-width=".6"/><rect x="1.500" y="3" width="14" height="3.800" fill="#fff"/><path d="M3.500 2.500l1 2.500M10.500 2.500v5" stroke="#000" stroke-width="1.300"/><rect x="0" y="6.500" width="16" height="3.500" fill="#000"/><path d="M1.500 8h3M7 8h3" stroke="#fff" stroke-width="1"/><path d="M12.500 7.500v2.500M14.500 7.500v1.500" stroke="#fff" stroke-width="1"/><rect x="1" y="10" width="9.500" height="2" fill="#fff"/></svg>
<span class="t" style="top:330.00px;font-size:14px;left:379.55px;transform:scaleX(0.9323);transform-origin:0 0;color:#fff;font-weight:bold;-webkit-text-stroke:0;">Efektivnost zakázky č. 191</span>
<div class="cb cx act" style="left:782px;top:327px;width:21px;height:21px;"><svg width="19" height="19" style="position:absolute;left:0;top:0"><path d="M5 5l9 9M14 5l-9 9" stroke="#fff" stroke-width="2.2" stroke-linecap="round"/></svg></div>
<div style="left:358px;top:351px;width:447px;height:358px;background:#D6E8FF;"></div>
<div style="left:359px;top:352px;width:445px;height:356px;background:#ECE9D8;"></div>
<div class="f" style="left:359px;top:352px;width:446px;height:330px;"></div>
<div class="b h" style="left:361px;top:354px;width:82px;height:17px;"></div>
<div class="b h" style="left:443px;top:354px;width:90px;height:17px;"></div>
<div class="b h" style="left:533px;top:354px;width:90px;height:17px;"></div>
<div class="b h" style="left:623px;top:354px;width:90px;height:17px;"></div>
<div class="b h" style="left:713px;top:354px;width:90px;height:17px;"></div>
<span class="t" style="top:354.50px;font-size:12px;left:368.50px;transform:scaleX(0.8635);transform-origin:0 0;">Druh polož.</span>
<span class="t" style="top:354.50px;font-size:12px;left:448.80px;transform:scaleX(0.8744);transform-origin:0 0;">Stav</span>
<span class="t" style="top:354.50px;font-size:12px;left:542.11px;transform:scaleX(0.9285);transform-origin:100% 0;">V nákl.cenách</span>
<span class="t" style="top:354.50px;font-size:12px;left:630.11px;transform:scaleX(0.9174);transform-origin:100% 0;">V prod.cenách</span>
<span class="t" style="top:354.50px;font-size:12px;left:740.98px;transform:scaleX(0.8569);transform-origin:100% 0;">Hrubý zisk</span>
<div style="left:362px;top:386px;width:440px;height:1px;background:#F0EFE4;"></div>
<div style="left:362px;top:400px;width:440px;height:1px;background:#F0EFE4;"></div>
<div style="left:362px;top:414px;width:440px;height:1px;background:#F0EFE4;"></div>
<div style="left:362px;top:428px;width:440px;height:1px;background:#F0EFE4;"></div>
<div style="left:362px;top:442px;width:440px;height:1px;background:#F0EFE4;"></div>
<div style="left:362px;top:456px;width:440px;height:1px;background:#F0EFE4;"></div>
<div style="left:362px;top:470px;width:440px;height:1px;background:#F0EFE4;"></div>
<div style="left:362px;top:484px;width:440px;height:1px;background:#F0EFE4;"></div>
<div style="left:362px;top:498px;width:440px;height:1px;background:#F0EFE4;"></div>
<div style="left:362px;top:512px;width:440px;height:1px;background:#F0EFE4;"></div>
<div style="left:362px;top:526px;width:440px;height:1px;background:#F0EFE4;"></div>
<div style="left:362px;top:540px;width:440px;height:1px;background:#F0EFE4;"></div>
<div style="left:362px;top:554px;width:440px;height:1px;background:#F0EFE4;"></div>
<div style="left:362px;top:568px;width:440px;height:1px;background:#F0EFE4;"></div>
<div style="left:362px;top:582px;width:440px;height:1px;background:#F0EFE4;"></div>
<div style="left:362px;top:596px;width:440px;height:1px;background:#F0EFE4;"></div>
<div style="left:362px;top:610px;width:440px;height:1px;background:#F0EFE4;"></div>
<div style="left:362px;top:624px;width:440px;height:1px;background:#F0EFE4;"></div>
<div style="left:362px;top:638px;width:440px;height:1px;background:#F0EFE4;"></div>
<div style="left:362px;top:652px;width:440px;height:1px;background:#F0EFE4;"></div>
<div style="left:362px;top:666px;width:440px;height:1px;background:#F0EFE4;"></div>
<div style="left:442px;top:372px;width:1px;height:308px;background:#F0EFE4;"></div>
<div style="left:532px;top:372px;width:1px;height:308px;background:#F0EFE4;"></div>
<div style="left:622px;top:372px;width:1px;height:308px;background:#F0EFE4;"></div>
<div style="left:712px;top:372px;width:1px;height:308px;background:#F0EFE4;"></div>
<span class="t" style="top:371.75px;font-size:12px;left:366.70px;transform:scaleX(0.8900);transform-origin:0 0;">Materiál</span>
<span class="t" style="top:371.75px;font-size:12px;left:448.80px;transform:scaleX(0.8900);transform-origin:0 0;">Vyfakturováno</span>
<span class="t" style="top:371.75px;font-size:12px;left:580.80px;transform:scaleX(0.8900);transform-origin:100% 0;">599,00</span>
<span class="t" style="top:371.75px;font-size:12px;left:660.78px;transform:scaleX(0.8900);transform-origin:100% 0;">1 265,00</span>
<span class="t" style="top:371.75px;font-size:12px;left:760.80px;transform:scaleX(0.8900);transform-origin:100% 0;">666,00</span>
<span class="t" style="top:385.75px;font-size:12px;left:448.80px;transform:scaleX(0.8900);transform-origin:0 0;">Nefakturováno</span>
<span class="t" style="top:385.75px;font-size:12px;left:580.80px;transform:scaleX(0.8900);transform-origin:100% 0;">797,00</span>
<span class="t" style="top:385.75px;font-size:12px;left:660.78px;transform:scaleX(0.8900);transform-origin:100% 0;">1 369,00</span>
<span class="t" style="top:385.75px;font-size:12px;left:760.80px;transform:scaleX(0.8900);transform-origin:100% 0;">572,00</span>
<span class="t" style="top:399.75px;font-size:12px;left:448.80px;transform:scaleX(0.8900);transform-origin:0 0;">Celkem</span>
<span class="t" style="top:399.75px;font-size:12px;left:570.78px;transform:scaleX(0.8900);transform-origin:100% 0;">1 396,00</span>
<span class="t" style="top:399.75px;font-size:12px;left:660.78px;transform:scaleX(0.8900);transform-origin:100% 0;">2 634,00</span>
<span class="t" style="top:399.75px;font-size:12px;left:750.78px;transform:scaleX(0.8900);transform-origin:100% 0;">1 238,00</span>
<span class="t" style="top:427.75px;font-size:12px;left:366.70px;transform:scaleX(0.8900);transform-origin:0 0;">Práce</span>
<span class="t" style="top:427.75px;font-size:12px;left:448.80px;transform:scaleX(0.8900);transform-origin:0 0;">Vyfakturováno</span>
<span class="t" style="top:441.75px;font-size:12px;left:448.80px;transform:scaleX(0.8900);transform-origin:0 0;">Nefakturováno</span>
<span class="t" style="top:441.75px;font-size:12px;left:580.80px;transform:scaleX(0.8900);transform-origin:100% 0;">305,00</span>
<span class="t" style="top:441.75px;font-size:12px;left:670.80px;transform:scaleX(0.8900);transform-origin:100% 0;">999,00</span>
<span class="t" style="top:441.75px;font-size:12px;left:760.80px;transform:scaleX(0.8900);transform-origin:100% 0;">694,00</span>
<span class="t" style="top:455.75px;font-size:12px;left:448.80px;transform:scaleX(0.8900);transform-origin:0 0;">Celkem</span>
<span class="t" style="top:455.75px;font-size:12px;left:580.80px;transform:scaleX(0.8900);transform-origin:100% 0;">305,00</span>
<span class="t" style="top:455.75px;font-size:12px;left:670.80px;transform:scaleX(0.8900);transform-origin:100% 0;">999,00</span>
<span class="t" style="top:455.75px;font-size:12px;left:760.80px;transform:scaleX(0.8900);transform-origin:100% 0;">694,00</span>
<span class="t" style="top:483.75px;font-size:12px;left:366.70px;transform:scaleX(0.8900);transform-origin:0 0;">Ostatní</span>
<span class="t" style="top:483.75px;font-size:12px;left:448.80px;transform:scaleX(0.8900);transform-origin:0 0;">Vyfakturováno</span>
<span class="t" style="top:497.75px;font-size:12px;left:448.80px;transform:scaleX(0.8900);transform-origin:0 0;">Nefakturováno</span>
<span class="t" style="top:497.75px;font-size:12px;left:670.80px;transform:scaleX(0.8900);transform-origin:100% 0;">200,00</span>
<span class="t" style="top:497.75px;font-size:12px;left:760.80px;transform:scaleX(0.8900);transform-origin:100% 0;">200,00</span>
<span class="t" style="top:511.75px;font-size:12px;left:448.80px;transform:scaleX(0.8900);transform-origin:0 0;">Celkem</span>
<span class="t" style="top:511.75px;font-size:12px;left:670.80px;transform:scaleX(0.8900);transform-origin:100% 0;">200,00</span>
<span class="t" style="top:511.75px;font-size:12px;left:760.80px;transform:scaleX(0.8900);transform-origin:100% 0;">200,00</span>
<span class="t" style="top:539.75px;font-size:12px;left:366.70px;transform:scaleX(0.8900);transform-origin:0 0;">Celkem</span>
<span class="t" style="top:539.75px;font-size:12px;left:448.80px;transform:scaleX(0.8900);transform-origin:0 0;">Vyfakturováno</span>
<span class="t" style="top:539.75px;font-size:12px;left:580.80px;transform:scaleX(0.8900);transform-origin:100% 0;">599,00</span>
<span class="t" style="top:539.75px;font-size:12px;left:660.78px;transform:scaleX(0.8900);transform-origin:100% 0;">1 265,00</span>
<span class="t" style="top:539.75px;font-size:12px;left:760.80px;transform:scaleX(0.8900);transform-origin:100% 0;">666,00</span>
<span class="t" style="top:553.75px;font-size:12px;left:448.80px;transform:scaleX(0.8900);transform-origin:0 0;">Nefakturováno</span>
<span class="t" style="top:553.75px;font-size:12px;left:570.78px;transform:scaleX(0.8900);transform-origin:100% 0;">1 102,00</span>
<span class="t" style="top:553.75px;font-size:12px;left:660.78px;transform:scaleX(0.8900);transform-origin:100% 0;">2 568,00</span>
<span class="t" style="top:553.75px;font-size:12px;left:750.78px;transform:scaleX(0.8900);transform-origin:100% 0;">1 466,00</span>
<span class="t" style="top:567.75px;font-size:12px;left:448.80px;transform:scaleX(0.8900);transform-origin:0 0;">Celkem</span>
<span class="t" style="top:567.75px;font-size:12px;left:570.78px;transform:scaleX(0.8900);transform-origin:100% 0;">1 701,00</span>
<span class="t" style="top:567.75px;font-size:12px;left:660.78px;transform:scaleX(0.8900);transform-origin:100% 0;">3 833,00</span>
<span class="t" style="top:567.75px;font-size:12px;left:750.78px;transform:scaleX(0.8900);transform-origin:100% 0;">2 132,00</span>
<span class="t" style="top:595.75px;font-size:12px;left:366.70px;transform:scaleX(0.8900);transform-origin:0 0;">Vyfakturováno</span>
<span class="t" style="top:595.75px;font-size:12px;left:448.80px;transform:scaleX(0.8900);transform-origin:0 0;">bez DPH a zál...</span>
<span class="t" style="top:595.75px;font-size:12px;left:580.80px;transform:scaleX(0.8900);transform-origin:100% 0;">599,00</span>
<span class="t" style="top:595.75px;font-size:12px;left:660.78px;transform:scaleX(0.8900);transform-origin:100% 0;">1 264,54</span>
<span class="t" style="top:595.75px;font-size:12px;left:760.80px;transform:scaleX(0.8900);transform-origin:100% 0;">665,54</span>
<div class="b" style="left:530px;top:688px;width:100px;height:20px;"></div>
<span class="t" style="top:690.00px;font-size:12px;left:537.98px;transform:scaleX(0.8805);transform-origin:50% 0;">Export do Excel</span>
<div class="b d" style="left:635px;top:688px;width:80px;height:20px;"></div>
<span class="t" style="top:690.00px;font-size:12px;left:664.22px;transform:scaleX(0.8812);transform-origin:50% 0;">Tisk</span>
<div class="b" style="left:720px;top:688px;width:80px;height:20px;"></div>
<span class="t" style="top:690.00px;font-size:12px;left:742.98px;transform:scaleX(0.9109);transform-origin:50% 0;">Konec</span>
</div></body></html>
